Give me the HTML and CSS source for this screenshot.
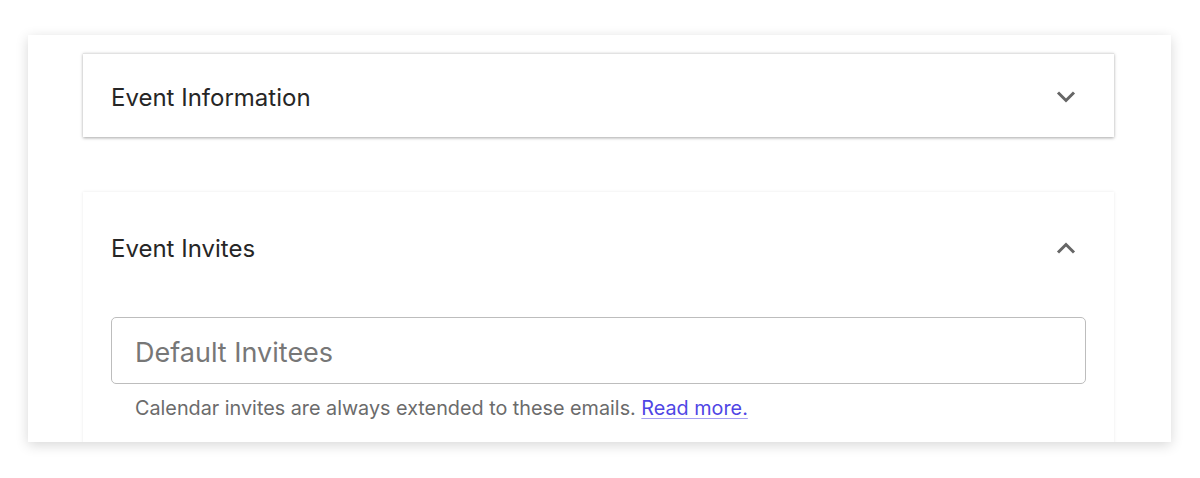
FILE: index.html
```html
<!DOCTYPE html>
<html>
<head>
<meta charset="utf-8">
<link rel="stylesheet" href="styles.css">
</head>
<body>
<div class="page">
  <div class="sheet">
    <section class="panel panel-collapsed">
      <div class="panel-head">
        <h2 class="panel-title">Event Information</h2>
        <svg class="chev" width="20" height="14" viewBox="0 0 20 14"><path d="M2 2.5 L10 10.5 L18 2.5" fill="none" stroke="#666" stroke-width="3"/></svg>
      </div>
    </section>
    <section class="panel panel-open">
      <div class="panel-head open-head">
        <h2 class="panel-title">Event Invites</h2>
        <svg class="chev" width="20" height="14" viewBox="0 0 20 14"><path d="M2 11.5 L10 3.5 L18 11.5" fill="none" stroke="#666" stroke-width="3"/></svg>
      </div>
      <div class="panel-body">
        <div class="field"><span class="placeholder">Default Invitees</span></div>
        <p class="help">Calendar invites are always extended to these emails. <a href="#" class="link">Read more.</a></p>
      </div>
    </section>
  </div>
</div>
</body>
</html>
```

FILE: styles.css
```css
* { box-sizing: border-box; }
html, body { margin: 0; padding: 0; background: #fff; }
body { font-family: Inter, "Noto Sans", sans-serif; color: #222; }
.page { padding: 35px 29px 0 28px; height: 478px; }
.sheet {
  height: 407px;
  background: #fff;
  box-shadow: 0 3px 12px rgba(0,0,0,0.16);
  padding: 18px 57px 0 55px;
  overflow: hidden;
}
.panel { background: #fff; }
.panel-collapsed {
  height: 84px;
  border-top: 1px solid #e2e2e2;
  box-shadow: 0 1px 3px rgba(0,0,0,0.35);
}
.panel-open {
  margin-top: 55px;
  box-shadow: 0 0 3px rgba(0,0,0,0.09);
  padding: 0 28px 40px 28px;
}
.panel-head {
  display: flex;
  align-items: center;
  justify-content: space-between;
  padding: 3px 38px 0 28px;
  height: 83px;
}
.open-head { padding: 0 10px 0 0; height: 112px; }
.panel-title {
  margin: 0;
  font-size: 24px;
  font-weight: 400;
  letter-spacing: 0;
  color: #262626;
}
.chev { display: block; }
.panel-body { padding-top: 13px; }
.field {
  height: 67px;
  border: 1.5px solid #bdbdbd;
  border-radius: 5px;
  display: flex;
  align-items: center;
  padding: 3px 0 0 23px;
}
.placeholder { font-size: 27px; color: #777; }
.help {
  margin: 11px 0 0 24px;
  font-size: 19.8px;
  line-height: 26px;
  color: #6b6b6b;
}
.link { color: #4f46e5; text-decoration: underline; text-decoration-color: #a59ff2; text-underline-offset: 3px; }
```
